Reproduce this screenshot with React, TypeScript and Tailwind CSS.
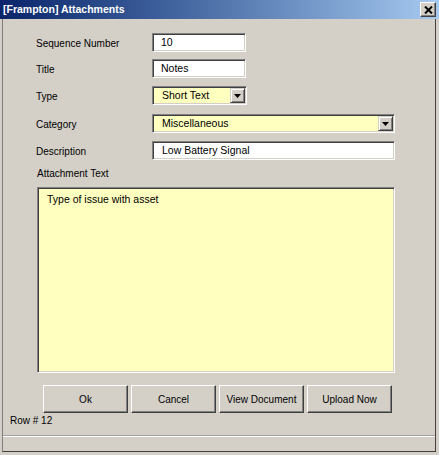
const font = "font-['Liberation_Sans',Arial,sans-serif]";

function Sunken({ className, children }: { className: string; children?: React.ReactNode }) {
  return (
    <div
      className={`flex items-center border border-t-[#808080] border-l-[#808080] border-b-white border-r-white shadow-[inset_1px_1px_0_#404040,inset_-1px_-1px_0_#d4d0c8] ${className}`}
    >
      {children}
    </div>
  );
}

function DropButton() {
  return (
    <div className="ml-auto mr-[1px] flex h-[15px] w-[15px] items-center justify-center border border-t-[#d4d0c8] border-l-[#d4d0c8] border-b-[#404040] border-r-[#404040] bg-[#d4d0c8] shadow-[inset_1px_1px_0_#ffffff,inset_-1px_-1px_0_#808080]">
      <svg width="7" height="4" viewBox="0 0 7 4">
        <path d="M0 0h7L3.5 4z" fill="#000" />
      </svg>
    </div>
  );
}

function Row({ label, mt, children }: { label: string; mt: string; children: React.ReactNode }) {
  return (
    <div className={`ml-[33px] flex h-[19px] items-center ${mt}`}>
      <div className="w-[116px] pt-[2px] text-[10px] text-black">{label}</div>
      {children}
    </div>
  );
}

function Btn({ label }: { label: string }) {
  return (
    <button
      type="button"
      className="h-[28px] w-[85px] border border-t-white border-l-white border-b-[#404040] border-r-[#404040] bg-[#d4d0c8] text-[10px] text-black shadow-[inset_-1px_-1px_0_#808080]"
    >
      {label}
    </button>
  );
}

export default function App() {
  return (
    <div className={`flex h-[455px] w-[439px] flex-col bg-[#d4d0c8] ${font}`}>
      <div className="flex h-[19px] shrink-0 items-center bg-gradient-to-r from-[#0a246a] to-[#a6caf0] pl-[3px] pr-[3px]">
        <span className="text-[10.5px] font-bold text-white">[Frampton] Attachments</span>
        <div className="ml-auto flex h-[15px] w-[16px] items-center justify-center border border-t-white border-l-white border-b-[#404040] border-r-[#404040] bg-[#d4d0c8] shadow-[inset_-1px_-1px_0_#808080]">
          <svg width="9" height="8" viewBox="0 0 9 8">
            <path d="M1 0.5L8 7.5M8 0.5L1 7.5" stroke="#000" strokeWidth="2" />
          </svg>
        </div>
      </div>

      <div className="mb-[3px] ml-[2px] mr-[3px] flex flex-1 flex-col border-b border-l border-r border-b-[#404040] border-l-[#808080] border-r-[#404040]">
        <div className="h-[14px]" />
        <Row label="Sequence Number" mt="mt-0">
          <Sunken className="h-[19px] w-[94px] bg-white pl-[8px] text-[10.5px]">10</Sunken>
        </Row>
        <Row label="Title" mt="mt-[7px]">
          <Sunken className="h-[19px] w-[94px] bg-white pl-[8px] text-[10.5px]">Notes</Sunken>
        </Row>
        <Row label="Type" mt="mt-[8px]">
          <Sunken className="h-[19px] w-[95px] bg-[#ffffc0] pl-[9px] text-[10.5px]">
            Short Text
            <DropButton />
          </Sunken>
        </Row>
        <Row label="Category" mt="mt-[9px]">
          <Sunken className="h-[19px] w-[243px] bg-[#ffffc0] pl-[9px] text-[10.5px]">
            Miscellaneous
            <DropButton />
          </Sunken>
        </Row>
        <Row label="Description" mt="mt-[8px]">
          <Sunken className="h-[19px] w-[243px] bg-white pl-[9px] text-[10.5px]">Low Battery Signal</Sunken>
        </Row>

        <div className="ml-[34px] mt-[8px] h-[12px] text-[10px] leading-[12px]">Attachment Text</div>
        <div className="ml-[34px] mt-[7px] h-[186px] w-[358px] border border-t-[#808080] border-l-[#808080] border-b-white border-r-white bg-[#ffffc0] pl-[9px] pt-[4px] text-[10.5px] shadow-[inset_1px_1px_0_#404040,inset_-1px_-1px_0_#d4d0c8]">
          Type of issue with asset
        </div>

        <div className="ml-[40px] mt-[12px] flex gap-[3px]">
          <Btn label="Ok" />
          <Btn label="Cancel" />
          <Btn label="View Document" />
          <Btn label="Upload Now" />
        </div>
        <div className="ml-[7px] mt-[1px] text-[10px] leading-[14px]">Row # 12</div>

        <div className="mt-auto h-[16px] border-t border-t-[#a0a0a0] shadow-[inset_0_1px_0_#ffffff]" />
      </div>
    </div>
  );
}
